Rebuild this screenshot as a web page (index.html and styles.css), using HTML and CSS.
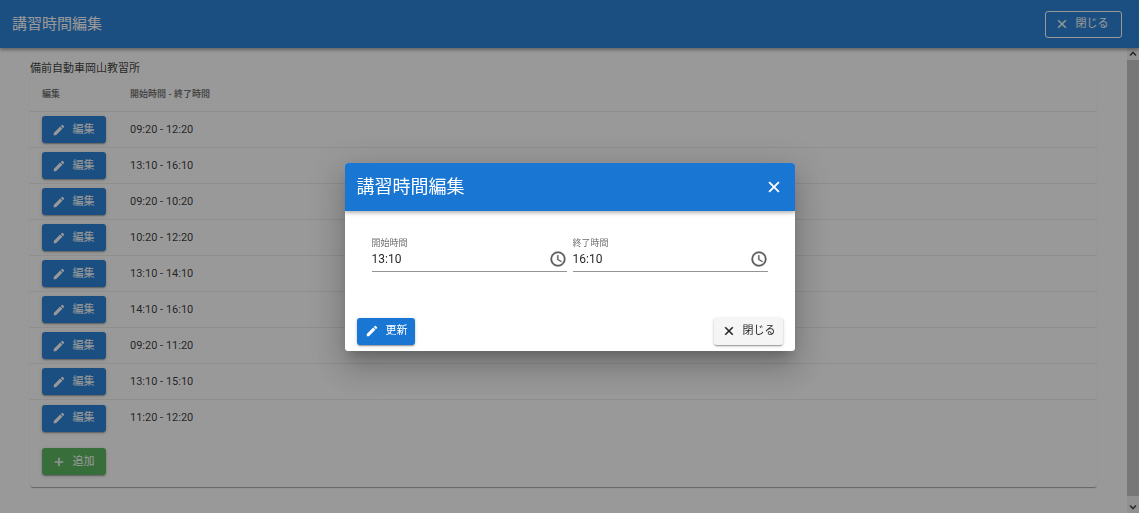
FILE: index.html
```
<!DOCTYPE html>
<html lang="ja">
<head>
    <meta charset="UTF-8">
    <meta name="viewport" content="width=device-width, initial-scale=1">
    <title>講習時間編集</title>
    <link rel="stylesheet" href="styles.css">
</head>
<body>
    <!-- Shared icons -->
    <svg class="icon-defs" aria-hidden="true">
        <symbol id="icon-pencil" viewBox="0 0 24 24"><path d="M20.71,7.04C21.1,6.65 21.1,6 20.71,5.63L18.37,3.29C18,2.9 17.35,2.9 16.96,3.29L15.12,5.12L18.87,8.87M3,17.25V21H6.75L17.81,9.93L14.06,6.18L3,17.25Z"/></symbol>
        <symbol id="icon-close" viewBox="0 0 24 24"><path stroke="currentColor" stroke-width="0.7" d="M19,6.41L17.59,5L12,10.59L6.41,5L5,6.41L10.59,12L5,17.59L6.41,19L12,13.41L17.59,19L19,17.59L13.41,12L19,6.41Z"/></symbol>
        <symbol id="icon-plus" viewBox="0 0 24 24"><path stroke="currentColor" stroke-width="0.7" d="M19,13H13V19H11V13H5V11H11V5H13V11H19V13Z"/></symbol>
        <symbol id="icon-clock" viewBox="0 0 24 24"><path stroke="currentColor" stroke-width="0.4" d="M12,20A8,8 0 0,0 20,12A8,8 0 0,0 12,4A8,8 0 0,0 4,12A8,8 0 0,0 12,20M12,2A10,10 0 0,1 22,12A10,10 0 0,1 12,22C6.47,22 2,17.5 2,12A10,10 0 0,1 12,2M12.5,7V12.25L17,14.92L16.25,16.15L11,13V7H12.5Z"/></symbol>
        <symbol id="icon-up" viewBox="0 0 12 12"><path d="M3,7.5L6,4.5L9,7.5" fill="none" stroke="currentColor" stroke-width="1.6"/></symbol>
        <symbol id="icon-down" viewBox="0 0 12 12"><path d="M3,4.5L6,7.5L9,4.5" fill="none" stroke="currentColor" stroke-width="1.6"/></symbol>
    </svg>

    <div class="page">
        <header class="toolbar">
            <h1 class="toolbar-title">講習時間編集</h1>
            <button type="button" class="btn btn-outlined"><svg class="icon"><use href="#icon-close"/></svg>閉じる</button>
        </header>
        <div class="page-body">
            <main class="content">
                <div class="school-name">備前自動車岡山教習所</div>
                <div class="card">
                    <table class="time-table">
                        <thead>
                            <tr><th class="col-edit">編集</th><th>開始時間 - 終了時間</th></tr>
                        </thead>
                        <tbody>
                            <tr><td><button type="button" class="btn btn-primary"><svg class="icon"><use href="#icon-pencil"/></svg>編集</button></td><td>09:20 - 12:20</td></tr>
                            <tr><td><button type="button" class="btn btn-primary"><svg class="icon"><use href="#icon-pencil"/></svg>編集</button></td><td>13:10 - 16:10</td></tr>
                            <tr><td><button type="button" class="btn btn-primary"><svg class="icon"><use href="#icon-pencil"/></svg>編集</button></td><td>09:20 - 10:20</td></tr>
                            <tr><td><button type="button" class="btn btn-primary"><svg class="icon"><use href="#icon-pencil"/></svg>編集</button></td><td>10:20 - 12:20</td></tr>
                            <tr><td><button type="button" class="btn btn-primary"><svg class="icon"><use href="#icon-pencil"/></svg>編集</button></td><td>13:10 - 14:10</td></tr>
                            <tr><td><button type="button" class="btn btn-primary"><svg class="icon"><use href="#icon-pencil"/></svg>編集</button></td><td>14:10 - 16:10</td></tr>
                            <tr><td><button type="button" class="btn btn-primary"><svg class="icon"><use href="#icon-pencil"/></svg>編集</button></td><td>09:20 - 11:20</td></tr>
                            <tr><td><button type="button" class="btn btn-primary"><svg class="icon"><use href="#icon-pencil"/></svg>編集</button></td><td>13:10 - 15:10</td></tr>
                            <tr><td><button type="button" class="btn btn-primary"><svg class="icon"><use href="#icon-pencil"/></svg>編集</button></td><td>11:20 - 12:20</td></tr>
                        </tbody>
                    </table>
                    <div class="card-actions">
                        <button type="button" class="btn btn-success"><svg class="icon"><use href="#icon-plus"/></svg>追加</button>
                    </div>
                </div>
            </main>
            <div class="scrollbar" aria-hidden="true">
                <svg class="scroll-arrow"><use href="#icon-up"/></svg>
                <div class="scroll-thumb"></div>
                <svg class="scroll-arrow"><use href="#icon-down"/></svg>
            </div>
        </div>
    </div>

    <!-- Edit dialog -->
    <div class="overlay">
        <form class="dialog" role="dialog" aria-modal="true" aria-labelledby="dialog-title">
            <div class="dialog-header">
                <h2 class="dialog-title" id="dialog-title">講習時間編集</h2>
                <button type="button" class="icon-btn" aria-label="閉じる"><svg class="icon-lg"><use href="#icon-close"/></svg></button>
            </div>
            <div class="dialog-body">
                <div class="field">
                    <label for="start-time">開始時間</label>
                    <div class="field-row">
                        <input type="text" id="start-time" value="13:10">
                        <svg class="icon-lg"><use href="#icon-clock"/></svg>
                    </div>
                </div>
                <div class="field">
                    <label for="end-time">終了時間</label>
                    <div class="field-row">
                        <input type="text" id="end-time" value="16:10">
                        <svg class="icon-lg"><use href="#icon-clock"/></svg>
                    </div>
                </div>
            </div>
            <div class="dialog-actions">
                <button type="button" class="btn btn-primary btn-compact"><svg class="icon"><use href="#icon-pencil"/></svg>更新</button>
                <button type="button" class="btn btn-default btn-compact"><svg class="icon"><use href="#icon-close"/></svg>閉じる</button>
            </div>
        </form>
    </div>
</body>
</html>
```
FILE: styles.css
```
* {
    box-sizing: border-box;
}
html, body {
    height: 100%;
    margin: 0;
}
body {
    overflow: hidden;
    background: #fff;
    color: rgba(0, 0, 0, 0.87);
    font-family: Roboto, "Noto Sans CJK JP", sans-serif;
    font-size: 11px;
    line-height: 16px;
}
.icon-defs {
    position: absolute;
    width: 0;
    height: 0;
}
.page {
    display: flex;
    flex-direction: column;
    height: 100vh;
}
.toolbar {
    display: flex;
    align-items: center;
    justify-content: space-between;
    flex: none;
    height: 48px;
    padding: 0 17px 0 12px;
    background: #1976d2;
    color: #fff;
    box-shadow: 0 2px 3px rgba(0, 0, 0, 0.3), 0 1px 6px rgba(0, 0, 0, 0.15);
    z-index: 1;
}
.toolbar-title {
    margin: 0;
    font-size: 15px;
    font-weight: 400;
    line-height: 24px;
}
.page-body {
    display: flex;
    flex: 1;
    min-height: 0;
}
.content {
    flex: 1;
    padding: 14px 30px;
}
.school-name {
    line-height: 14px;
}
.card {
    border-radius: 3px;
    box-shadow: 0 2px 1px -1px rgba(0, 0, 0, 0.3), 0 1px 1px rgba(0, 0, 0, 0.12), 0 0 1px rgba(0, 0, 0, 0.08);
}

/* Buttons */
.btn {
    display: inline-flex;
    align-items: center;
    justify-content: center;
    gap: 7px;
    height: 27px;
    min-width: 64px;
    padding: 0 11px 0 9px;
    border: none;
    border-radius: 3px;
    font-family: inherit;
    font-size: 11px;
    font-weight: 400;
    line-height: 16px;
    color: #fff;
    cursor: pointer;
    box-shadow: 0 2px 1px -1px rgba(0, 0, 0, 0.2), 0 1px 2px rgba(0, 0, 0, 0.2), 0 1px 4px rgba(0, 0, 0, 0.12);
}
.btn-primary {
    background: #1976d2;
}
.btn-success {
    background: #4caf50;
}
.btn-default {
    background: #f5f5f5;
    color: rgba(0, 0, 0, 0.87);
}
.btn-outlined {
    min-width: 77px;
    padding: 0 12px 0 8px;
    background: transparent;
    border: 1px solid #fff;
    box-shadow: none;
}
.btn-compact {
    min-width: 58px;
    padding: 0 7px 0 8px;
}
.icon {
    flex: none;
    width: 14px;
    height: 14px;
    fill: currentColor;
}
.icon-lg {
    flex: none;
    width: 18px;
    height: 18px;
    fill: currentColor;
}

/* Time table */
.time-table {
    width: 100%;
    border-collapse: separate;
    border-spacing: 0;
}
.time-table th, .time-table td {
    height: 36px;
    padding: 0 12px;
    text-align: left;
}
.time-table th {
    font-size: 9px;
    font-weight: 700;
    color: rgba(0, 0, 0, 0.6);
    border-bottom: 1px solid rgba(0, 0, 0, 0.08);
}
.time-table .col-edit {
    width: 88px;
}
.time-table td {
    border-bottom: 1px solid rgba(0, 0, 0, 0.08);
}
.time-table td .btn {
    vertical-align: middle;
}
.time-table tr:last-child td {
    border-bottom: none;
}
.card-actions {
    display: flex;
    padding: 12px;
}

/* Scrollbar */
.scrollbar {
    display: flex;
    flex-direction: column;
    width: 12px;
    background: #f1f1f1;
    color: #333;
}
.scroll-arrow {
    width: 12px;
    height: 12px;
}
.scroll-thumb {
    flex: 1;
    margin-bottom: 5px;
    background: #c1c1c1;
}

/* Dialog */
.overlay {
    position: fixed;
    inset: 0;
    z-index: 10;
    display: flex;
    align-items: center;
    justify-content: center;
    background: rgba(33, 33, 33, 0.46);
}
.dialog {
    width: 450px;
    max-width: 90%;
    overflow: hidden;
    border-radius: 3px;
    background: #fff;
    box-shadow: 0 8px 11px -5px rgba(0, 0, 0, 0.2), 0 18px 28px 2px rgba(0, 0, 0, 0.14), 0 7px 34px 6px rgba(0, 0, 0, 0.12);
}
.dialog-header {
    display: flex;
    align-items: center;
    justify-content: space-between;
    height: 48px;
    padding: 0 12px;
    background: #1976d2;
    color: #fff;
    box-shadow: 0 2px 3px rgba(0, 0, 0, 0.2), 0 1px 7px rgba(0, 0, 0, 0.14);
}
.dialog-title {
    margin: 0;
    font-size: 18px;
    font-weight: 400;
    line-height: 24px;
}
.icon-btn {
    display: flex;
    padding: 0;
    border: none;
    background: none;
    color: inherit;
    cursor: pointer;
}
.dialog-body {
    display: flex;
    gap: 6px;
    padding: 27px 27px 41px;
}
.field {
    flex: 1;
    min-width: 0;
}
.field label {
    display: block;
    font-size: 9px;
    line-height: 11px;
    color: rgba(0, 0, 0, 0.6);
}
.field-row {
    display: flex;
    align-items: flex-start;
    height: 23px;
    padding-top: 1px;
    border-bottom: 1px solid rgba(0, 0, 0, 0.42);
    color: rgba(0, 0, 0, 0.6);
}
.field-row input {
    flex: 1;
    min-width: 0;
    height: 18px;
    padding: 0;
    border: none;
    outline: none;
    background: none;
    font-family: inherit;
    font-size: 12px;
    line-height: 16px;
    color: rgba(0, 0, 0, 0.87);
}
.dialog-actions {
    display: flex;
    justify-content: space-between;
    padding: 5px 12px 6px;
}
```
